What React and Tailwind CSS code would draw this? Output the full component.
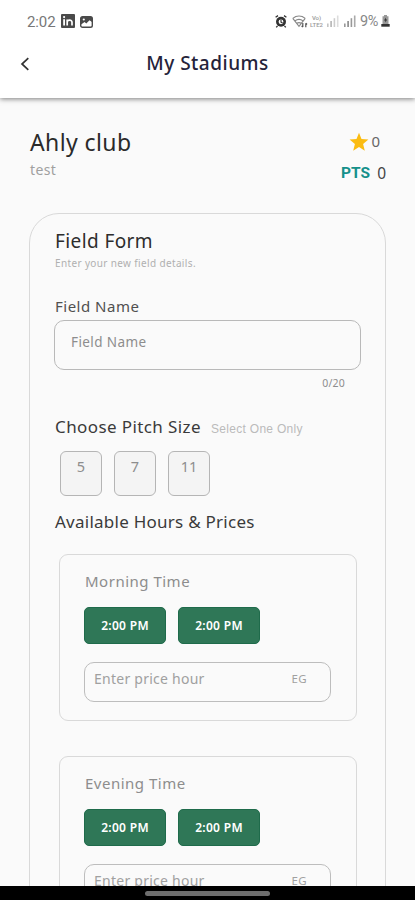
import React from 'react';

const pitchSizes = ['5', '7', '11'];

const periods = [
  { title: 'Morning Time', hours: ['2:00 PM', '2:00 PM'] },
  { title: 'Evening Time', hours: ['2:00 PM', '2:00 PM'] },
];

const LinkedInIcon = () => (
  <svg width="14" height="14" viewBox="0 0 14 14">
    <rect width="14" height="14" rx="1" fill="#4a4a4a" />
    <rect x="2.2" y="5.2" width="1.8" height="6.3" fill="#fff" />
    <circle cx="3.1" cy="3.1" r="1.1" fill="#fff" />
    <path d="M6.2 11.5V5.4M6.2 8c0-2.4 4.8-2.8 4.8.2v3.3" stroke="#fff" strokeWidth="1.7" fill="none" />
  </svg>
);

const PictureIcon = () => (
  <svg width="13" height="12" viewBox="0 0 13 12">
    <rect x="0.7" y="0.7" width="11.6" height="10.6" rx="1.8" fill="#fff" stroke="#4a4a4a" strokeWidth="1.4" />
    <path d="M1 1h11v5L9.5 4.2 6.3 7.4 4.6 6 1 8.500z" fill="#4a4a4a" />
    <circle cx="3.8" cy="3.5" r="1.1" fill="#fff" />
  </svg>
);

const AlarmIcon = () => (
  <svg width="12" height="13" viewBox="0 0 12 13">
    <path d="M0.6 2.2 3 0.6M11.4 2.2 9 0.6M2.5 11 1.2 12.4M9.5 11l1.3 1.4" stroke="#333" strokeWidth="1.3" />
    <circle cx="6" cy="6.8" r="5" fill="#333" />
    <circle cx="6" cy="6.8" r="2.4" fill="#fff" />
    <path d="M6 4.8v2.3l1.6.8" stroke="#333" strokeWidth="1.1" fill="none" />
  </svg>
);

const WifiIcon = () => (
  <svg width="16" height="13" viewBox="0 0 16 13" fill="none" stroke="#888" strokeWidth="1.2">
    <path d="M0.8 3.4c3.7-3 8.7-3 12.4 0M2.8 5.9c2.6-2 5.8-2 8.4 0M4.8 8.3c1.4-1 3-1 4.4 0" />
    <path d="M0.8 3.4 7 11.3l6.2-7.9" />
    <path d="M10.8 8v4M9.6 10.8l1.2 1.4M13.8 12.3v-4M15 9.5l-1.2-1.4" stroke="#555" />
  </svg>
);

const Signal = ({ first }) => (
  <svg width="12" height="12" viewBox="0 0 12 12">
    <rect x="0" y="8.5" width="1.6" height="3.5" fill={first ? '#c4c4c4' : '#999'} />
    <rect x="3.3" y="6" width="1.6" height="6" fill={first ? '#b4b4b4' : '#888'} />
    <rect x="6.6" y="3.2" width="1.6" height="8.8" fill={first ? '#ccc' : '#999'} />
    <rect x="9.9" y="0.5" width="1.6" height="11.5" fill={first ? '#ddd' : '#aaa'} />
  </svg>
);

const BatteryIcon = () => (
  <svg width="9" height="12" viewBox="0 0 9 12">
    <path d="M3 0h3v1.2h1.5V9h-6V1.2H3z" fill="#999" />
    <path d="M4.9 2.5 3 5.6h1.3v2l1.9-3.1H4.9z" fill="#333" />
    <path d="M0.3 9h8.4v2.7H.3z" fill="#333" />
  </svg>
);

const StatusBar = () => (
  <div className="flex h-[42px] items-center pl-[27px] pr-[25px]">
    <span className="mt-px w-[34px] font-[Roboto] text-[15px] leading-5 tracking-[-0.1px] text-[#777]">2:02</span>
    <LinkedInIcon />
    <div className="ml-[5px] mt-px">
      <PictureIcon />
    </div>
    <div className="ml-auto flex items-center">
      <AlarmIcon />
      <div className="ml-[5px]">
        <WifiIcon />
      </div>
      <div className="ml-px flex w-[15px] flex-col items-center font-[Roboto] text-[6px] font-medium leading-[7px] text-[#999]">
        <span>Vo)</span>
        <span>LTE2</span>
      </div>
      <div className="ml-[3px] flex gap-[5px]">
        <Signal first />
        <Signal />
      </div>
      <span className="ml-[4px] mt-px w-[21px] font-[Roboto] text-[14.5px] leading-5 tracking-[-0.5px] text-[#888]">9%</span>
      <BatteryIcon />
    </div>
  </div>
);

const Header = () => (
  <header className="relative z-10 h-[98px] shrink-0 bg-white shadow-[0_1px_5px_rgba(0,0,0,0.5)]">
    <StatusBar />
    <div className="grid h-[42px] grid-cols-[1fr_auto_1fr] items-center">
      <svg className="ml-[20px] mt-[2px]" width="10" height="14" viewBox="0 0 10 14">
        <path d="M8.3 1.2 2 7l6.300 5.800" fill="none" stroke="#333" strokeWidth="1.7" />
      </svg>
      <h1 className="text-[19px] font-medium leading-6 tracking-[0.5px] text-[#25233a]">My Stadiums</h1>
    </div>
  </header>
);

const ClubInfo = () => (
  <div className="flex h-[53px] justify-between pr-[1px]">
    <div>
      <h2 className="text-[23px] leading-8 tracking-[0.4px] text-[#2a2a2a]">Ahly club</h2>
      <p className="mt-[2px] text-[14px] leading-5 tracking-[0.4px] text-[#a0a0a0]">test</p>
    </div>
    <div className="flex shrink-0 flex-col items-end">
      <div className="mt-[5px] flex h-[22px] shrink-0 items-center pr-[6px]">
        <svg className="size-[20px]" viewBox="0 0 20 20">
          <path d="M10 .8l2.5 6.3 6.900.5-5.300 4.400 1.700 6.700L10 15l-5.800 3.700 1.700-6.700L.6 7.600l6.900-.5z" fill="#fbbc12" />
        </svg>
        <span className="-mt-[3px] ml-[2px] text-[15px] leading-5 text-[#666]">0</span>
      </div>
      <div className="mt-[9px] flex shrink-0 items-center">
        <span className="mt-px font-[Roboto] text-[15.5px] font-bold leading-5 text-[#15908a]">PTS</span>
        <span className="ml-[7px] text-[15.5px] leading-5 text-[#444]">0</span>
      </div>
    </div>
  </div>
);

const TimeCard = ({ title, hours }) => (
  <div className="ml-[5px] mr-[4px] h-[167px] rounded-[9px] border border-[#d9d9d9] pl-6 pr-[25px] pt-4">
    <h4 className="pl-px text-[15px] leading-5 tracking-[0.5px] text-[#8d8d8d]">{title}</h4>
    <div className="mt-4 flex gap-3">
      {hours.map((hour, i) => (
        <button
          key={i}
          className="h-[37px] w-[82px] rounded-[5px] border border-[#1f6b4b] bg-[#2f7757] text-[12px] font-semibold leading-4 tracking-[0.3px] text-white"
        >
          {hour}
        </button>
      ))}
    </div>
    <div className="mt-[18px] flex h-10 justify-between rounded-[10px] border border-[#bdbdbd] pl-[9px] pr-[23px] pt-[6px] leading-5 text-[#a0a0a0]">
      <span className="text-[14px] tracking-[0.25px]">Enter price hour</span>
      <span className="text-[11.5px] tracking-[0.4px]">EG</span>
    </div>
  </div>
);

const FieldForm = () => (
  <section className="-ml-px mr-px mt-[34px] h-[900px] rounded-t-[30px] border border-[#d9d9d9] px-6 pt-[15px]">
    <h3 className="pl-px text-[19px] leading-6 tracking-[0.4px] text-[#2d2d2d]">Field Form</h3>
    <p className="mt-[3px] pl-px text-[10px] leading-[14px] tracking-[0.36px] text-[#b0b0b0]">Enter your new field details.</p>

    <label className="mt-[26px] block pl-px text-[15px] leading-5 tracking-[0.5px] text-[#505050]">Field Name</label>
    <div className="mt-1 h-[50px] rounded-[10px] border border-[#b9b9b9] pl-4 pt-[11px] text-[13.5px] leading-5 tracking-[0.4px] text-[#8d8d8d]">
      Field Name
    </div>
    <p className="mt-[6px] pr-[16px] text-right text-[10.5px] leading-[14px] tracking-[0.2px] text-[#8d8d8d]">0/20</p>

    <div className="mt-[25px] flex h-6 items-baseline pl-px leading-6">
      <h4 className="text-[17px] tracking-[0.4px] text-[#3a3a3a]">Choose Pitch Size</h4>
      <span className="ml-[10px] font-['Liberation_Sans'] text-[12px] tracking-[0.3px] text-[#bbb]">Select One Only</span>
    </div>
    <div className="ml-[6px] mt-[12px] flex gap-3">
      {pitchSizes.map((size) => (
        <div
          key={size}
          className="h-[45px] w-[42px] rounded-[6px] border border-[#b5b5b5] bg-[#f4f4f4] pt-1 text-center text-[14.5px] leading-5 text-[#8d8d8d]"
        >
          {size}
        </div>
      ))}
    </div>

    <h4 className="mb-5 mt-[14px] pl-px text-[17px] leading-6 tracking-[0.25px] text-[#3a3a3a]">Available Hours &amp; Prices</h4>
    <div className="flex flex-col gap-[35px]">
      {periods.map((period) => (
        <TimeCard key={period.title} {...period} />
      ))}
    </div>
  </section>
);

const App = () => {
  return (
    <div className="flex h-[900px] w-[415px] flex-col overflow-hidden bg-[#fafafa] font-['Noto_Sans',sans-serif]">
      <Header />
      <main className="min-h-0 flex-1 overflow-hidden pl-[30px] pr-[28px] pt-7">
        <ClubInfo />
        <FieldForm />
      </main>
      {/* Gesture bar */}
      <div className="flex h-[14px] shrink-0 items-center justify-center bg-black">
        <div className="h-[5px] w-[125px] rounded-full bg-[#6e6e6e]" />
      </div>
    </div>
  );
};

export default App;
